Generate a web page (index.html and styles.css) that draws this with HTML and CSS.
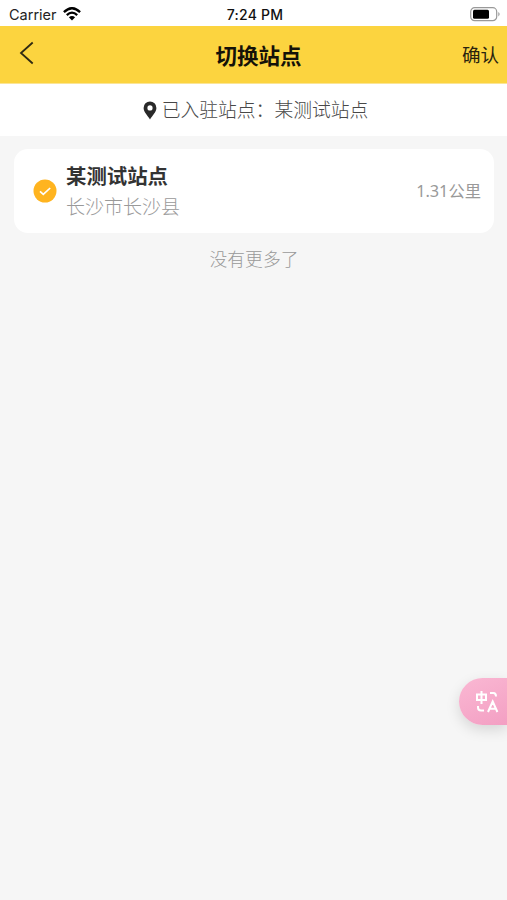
FILE: index.html
```html
<!DOCTYPE html>
<html lang="zh-CN">
<head>
<meta charset="utf-8">
<title>切换站点</title>
<link rel="stylesheet" href="styles.css">
</head>
<body>
<div class="status">
  <div class="carrier"><span>Carrier</span>
    <svg class="wifi" width="18" height="14" viewBox="0 0 18 14"><g fill="none" stroke="#000" stroke-width="2.3"><path d="M.9 5.1Q9-2.7 17.1 5.1"/><path d="M3.8 8.1Q9 3.2 14.2 8.1"/></g><path d="M5.9 10.2Q9 7.8 12.1 10.2L9 13.6Z"/></svg>
  </div>
  <div class="time">7:24 PM</div>
  <svg class="battery" width="31" height="15" viewBox="0 0 31 15"><rect x=".7" y=".7" width="26" height="13" rx="4" fill="#fff" stroke="#999" stroke-width="1.2"/><rect x="3" y="2.8" width="16" height="9" rx="1.5"/><path d="M28.3 5Q31 7.2 28.3 9.5Z" fill="#999"/></svg>
</div>
<header class="nav">
  <svg class="back" width="16" height="24" viewBox="0 0 16 24"><path d="M13.7 1.5L2 12L13.7 22.5" fill="none" stroke="#302a12" stroke-width="1.8"/></svg>
  <h1 class="title">切换站点</h1>
  <div class="confirm">确认</div>
</header>
<div class="current">
  <svg class="pin" width="14" height="19" viewBox="0 0 14 19"><path fill="#292929" fill-rule="evenodd" d="M7 .5A6.4 6.4 0 0 0 .6 6.9C.6 11 4.8 14.5 7 18.5C9.2 14.5 13.4 11 13.4 6.9A6.4 6.4 0 0 0 7 .5ZM7 4.3A2.6 2.6 0 1 1 7 9.5A2.6 2.6 0 0 1 7 4.3Z"/></svg>
  <span>已入驻站点：某测试站点</span>
</div>
<main class="list">
  <div class="card">
    <svg class="check" width="24" height="24" viewBox="0 0 24 24"><circle cx="12" cy="12" r="11.5" fill="#ffb41f"/><path d="M7 12.3L10.3 15.4L17.2 9" fill="none" stroke="#fff" stroke-width="1.7"/></svg>
    <div class="info">
      <div class="name">某测试站点</div>
      <div class="address">长沙市长沙县</div>
    </div>
    <div class="distance">1.31公里</div>
  </div>
  <div class="end">没有更多了</div>
</main>
<div class="translate">
  <svg width="24" height="24" viewBox="0 0 24 24" fill="none" stroke="#fff" stroke-width="2"><path d="M2 4.5H11V10H2ZM6.5 1V14M15 3H18.5Q21 3 21 6.5M3 16V17.5Q3 20.5 6 20.5H9M13 22L17.7 11.5L22.4 22M14.5 18.8H21"/></svg>
</div>
</body>
</html>
```
FILE: styles.css
```css
* { box-sizing: border-box; }
body {
  margin: 0;
  min-height: 900px;
  background: #f6f6f6;
  color: #333;
  font-family: "Noto Sans", "Noto Sans CJK SC", sans-serif;
  overflow: hidden;
}
svg { display: block; flex: none; }
.status {
  display: grid;
  grid-template-columns: 1fr auto 1fr;
  align-items: center;
  height: 26px;
  padding: 0 6px 0 9px;
  background: #fff;
  color: #222;
  font: 14.5px/26px Inter, sans-serif;
}
.carrier { display: flex; align-items: center; gap: 6px; }
.carrier span { padding-top: 2px; }
.time { padding: 2px 0 0 0; color: #111; font-size: 14px; font-weight: 500; letter-spacing: .2px; }
.battery { justify-self: end; }
.nav {
  display: grid;
  grid-template-columns: 1fr auto 1fr;
  align-items: center;
  height: 58px;
  padding: 0 8px 0 19px;
  background: #fcd43f;
  border-bottom: 1px solid #fbe596;
}
.back { margin-bottom: 4px; }
.title { margin: 2px 0 0 -11px; color: #151208; font-size: 21.5px; line-height: 30px; font-weight: 700; transform: translateX(5px); }
.confirm { justify-self: end; color: #29230e; font-size: 18.5px; line-height: 28px; }
.current {
  display: flex;
  align-items: center;
  justify-content: center;
  gap: 5px;
  height: 52px;
  padding-left: 4px;
  background: #fff;
  color: #484848;
  font-size: 18.8px;
  line-height: 28px;
  font-weight: 300;
}
.list { padding: 13px 13px 0 14px; }
.card {
  display: flex;
  align-items: center;
  height: 84px;
  padding: 0 13px 0 19px;
  border-radius: 14px;
  background: #fff;
}
.info { flex: 1; margin-left: 9px; }
.name { font-size: 20.4px; line-height: 32px; font-weight: 700; }
.address { color: #999; font-size: 19px; line-height: 31px; font-weight: 300; }
.distance { color: #999; font-size: 16.3px; line-height: 24px; }
.end { margin-top: 12px; color: #999; font-size: 17.8px; line-height: 28px; text-align: center; font-weight: 300; }
.translate {
  position: absolute;
  top: 678px;
  right: 0;
  display: flex;
  align-items: center;
  width: 48px;
  height: 47px;
  padding-left: 16px;
  border-radius: 24px 0 0 24px;
  background: linear-gradient(155deg, #fab8d3, #f39fc3);
  box-shadow: 0 5px 14px rgba(0, 0, 0, .13);
}
```
